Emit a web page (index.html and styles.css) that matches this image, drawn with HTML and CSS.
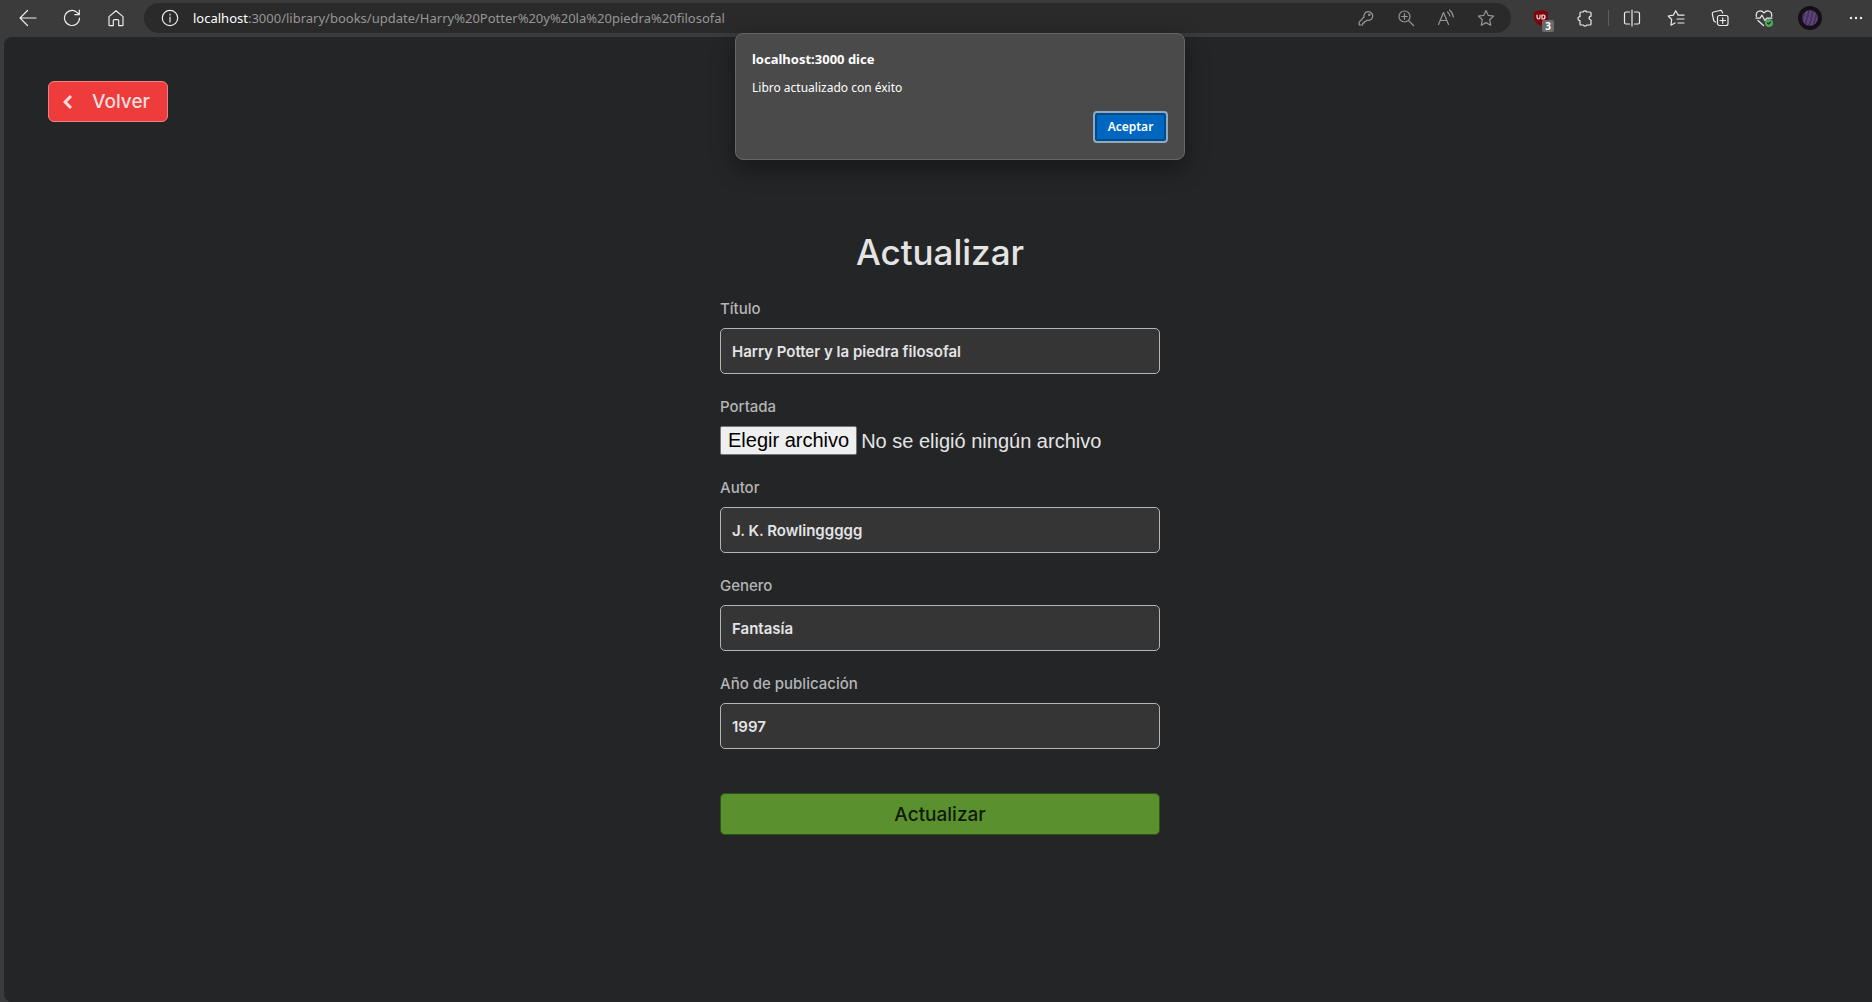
FILE: index.html
```html
<!DOCTYPE html>
<html lang="es">
<head>
  <meta charset="utf-8">
  <meta name="viewport" content="width=device-width, initial-scale=1">
  <title>Actualizar libro</title>
  <link rel="stylesheet" href="styles.css">
</head>
<body>
  <header class="toolbar">
    <nav class="toolbar-nav" aria-label="Navegación">
      <button class="tool" type="button" aria-label="Atrás"><svg class="icon" viewBox="0 0 18 18"><path d="M17 9H1.500M8.500 1.500L1 9l7.500 7.500"/></svg></button>
      <button class="tool" type="button" aria-label="Recargar"><svg class="icon" viewBox="0 0 18 18"><path d="M16.500 9A7.500 7.500 0 1 1 14 3.400L16 5.500M16.300 1v4.700h-4.500"/></svg></button>
      <button class="tool" type="button" aria-label="Inicio"><svg class="icon" viewBox="0 0 18 18"><path d="M2 7.600L9 1.700l7 5.900v8.300q0 .7-.7.700h-3.600v-5q0-1-1-1H7.300q-1 0-1 1v5H2.700q-.7 0-.7-.7z"/></svg></button>
    </nav>

    <div class="address">
      <button class="tool" type="button" aria-label="Información del sitio"><svg class="icon" viewBox="0 0 18 18"><circle cx="9" cy="9" r="7.700"/><path d="M9 8v5M9 5v1"/></svg></button>
      <p class="url"><span class="url-host">localhost</span>:3000/library/books/update/Harry%20Potter%20y%20la%20piedra%20filosofal</p>
      <div class="address-tools">
        <button class="tool tool-dim" type="button" aria-label="Contraseñas"><svg class="icon" viewBox="0 0 18 18"><path d="M7 8A4.400 4.400 0 1 1 10 11.200L8.700 12.500H7.300V14H5.600v2H2.200v-2.800z"/><circle cx="12.300" cy="5.800" r=".7"/></svg></button>
        <button class="tool tool-dim" type="button" aria-label="Zoom"><svg class="icon" viewBox="0 0 18 18"><circle cx="7.500" cy="7.500" r="5.500"/><path d="M11.600 11.600L16.500 16.500M7.500 4.700v5.600M4.700 7.500h5.600"/></svg></button>
        <button class="tool tool-dim" type="button" aria-label="Leer en voz alta"><svg class="icon" viewBox="0 0 18 18"><path d="M1.500 15.500L6.500 3.500l5 12M3.200 11.500h6.600M10.500 3q2 1.500 2.300 4M12.500 1q3.300 2.500 3.800 7"/></svg></button>
        <button class="tool tool-dim" type="button" aria-label="Favorito"><svg class="icon" viewBox="0 0 18 18"><path d="M9 1.500l2.300 4.900 5.300.7-3.900 3.700 1 5.400L9 13.600l-4.700 2.600 1-5.400L1.400 7.100l5.300-.7z"/></svg></button>
      </div>
    </div>

    <div class="toolbar-extras">
      <button class="tool" type="button" aria-label="Bloqueador, 3 elementos">
        <svg class="icon" viewBox="0 0 18 18"><path class="shield" d="M9 1l7 2v6q0 4.800-7 8-7-3.200-7-8V3z"/><path d="M5 6v2q0 2 1.500 2T8 8V6M10 6v4h1q2 0 2-2t-2-2z"/></svg>
        <span class="badge">3</span>
      </button>
      <button class="tool" type="button" aria-label="Extensiones"><svg class="icon" viewBox="0 0 18 18"><path d="M5 3h2.200a2 2 0 0 1 3.600 0H14q1 0 1 1v3.200a1.900 1.900 0 1 0 0 3.800V15q0 1-1 1h-3.200a2 2 0 0 1-3.600 0H5q-1 0-1-1v-3.300a2 2 0 0 1 0-4V4q0-1 1-1z"/></svg></button>
      <span class="divider"></span>
      <button class="tool" type="button" aria-label="Pantalla dividida"><svg class="icon" viewBox="0 0 18 18"><path d="M6.500 3H3Q1.500 3 1.500 4.500v9Q1.500 15 3 15h3.500M11.500 3H15q1.500 0 1.500 1.500v9q0 1.500-1.500 1.500h-3.500M9 1v16"/></svg></button>
      <button class="tool" type="button" aria-label="Favoritos"><svg class="icon" viewBox="0 0 18 18"><path d="M11 5.700L8.700 1.700 6.300 6.200 1.200 7l3.500 3.500-.8 5.700L8 13.900M11 6.200h6M10 10H17M11 14H17"/></svg></button>
      <button class="tool" type="button" aria-label="Colecciones"><svg class="icon" viewBox="0 0 18 18"><rect x="6.500" y="6.500" width="10.500" height="10" rx="2"/><path d="M11.700 8.800v5.500M9 11.500h5.500M4.500 13L2.800 11.800 1.300 5Q1 3.500 2.500 3L9 1.500q1.500-.2 2 1l.7 1.500"/></svg></button>
      <button class="tool" type="button" aria-label="Rendimiento"><svg class="icon" viewBox="0 0 18 18"><path d="M1.500 7.500Q.5 3.500 3.500 2.200 6.700 1 9 4q2.300-3 5.500-1.800 3 1.300 2 5.300M1 9.200h4L7 6.200l3 5.500 1.700-2.500H17M3 11.500l5.500 5"/><circle class="status" cx="14" cy="14" r="4"/><path class="status-tick" d="M12.500 14l1 1 2-2"/></svg></button>
      <button class="avatar" type="button" aria-label="Perfil"></button>
      <button class="tool" type="button" aria-label="Más opciones"><svg class="icon" viewBox="0 0 18 18"><g class="dots"><circle cx="4" cy="9" r="1.200"/><circle cx="9" cy="9" r="1.200"/><circle cx="14" cy="9" r="1.200"/></g></svg></button>
    </div>
  </header>

  <main class="page">
    <button class="back" type="button"><svg class="back-icon" viewBox="0 0 10 16"><path d="M8 2L2 8l6 6"/></svg>Volver</button>

    <form class="form">
      <h1 class="title">Actualizar</h1>
      <div class="field">
        <label class="label" for="titulo">Título</label>
        <input class="input" id="titulo" type="text" value="Harry Potter y la piedra filosofal">
      </div>
      <div class="field">
        <label class="label" for="portada">Portada</label>
        <div class="file">
          <span class="file-button">Elegir archivo</span>
          <span>No se eligió ningún archivo</span>
          <input class="file-input" id="portada" type="file">
        </div>
      </div>
      <div class="field">
        <label class="label" for="autor">Autor</label>
        <input class="input" id="autor" type="text" value="J. K. Rowlinggggg">
      </div>
      <div class="field">
        <label class="label" for="genero">Genero</label>
        <input class="input" id="genero" type="text" value="Fantasía">
      </div>
      <div class="field">
        <label class="label" for="anio">Año de publicación</label>
        <input class="input" id="anio" type="text" value="1997">
      </div>
      <button class="submit" type="submit">Actualizar</button>
    </form>
  </main>

  <dialog class="alert" open aria-labelledby="alert-title">
    <h2 class="alert-title" id="alert-title">localhost:3000 dice</h2>
    <p class="alert-text">Libro actualizado con éxito</p>
    <button class="alert-accept" type="button">Aceptar</button>
  </dialog>
</body>
</html>
```

FILE: styles.css
```css
* {
  box-sizing: border-box;
}

body {
  margin: 0;
  min-height: 100vh;
  display: flex;
  flex-direction: column;
  position: relative;
  background: #3b3b3b;
  color: #e4e4e5;
  font-family: "Inter", sans-serif;
}

button,
input {
  font: inherit;
}

button {
  padding: 0;
  border: 0;
  background: none;
  color: inherit;
}

h1,
h2,
p {
  margin: 0;
}

/* Browser toolbar */
.toolbar {
  height: 37px;
  padding: 3px 4px 4px 16px;
  display: flex;
  align-items: center;
  gap: 16px;
}

.toolbar-nav {
  display: flex;
  gap: 20px;
}

.tool {
  position: relative;
  width: 24px;
  height: 24px;
  display: flex;
  flex: none;
  align-items: center;
  justify-content: center;
  color: #ececec;
}

.tool-dim {
  color: #969696;
}

.icon {
  width: 18px;
  height: 18px;
  fill: none;
  stroke: currentColor;
  stroke-width: 1.2;
  stroke-linecap: round;
  stroke-linejoin: round;
}

.address {
  flex: 1;
  height: 30px;
  padding: 0 13px 0 14px;
  display: flex;
  align-items: center;
  gap: 11px;
  border-radius: 15px;
  background: #2a2a2a;
}

.url {
  flex: 1;
  min-width: 0;
  overflow: hidden;
  white-space: nowrap;
  color: #969696;
  font: 13px/20px "Noto Sans", sans-serif;
}

.url-host {
  color: #ffffff;
}

.address-tools {
  display: flex;
  gap: 16px;
}

.toolbar-extras {
  padding-left: 2px;
  display: flex;
  align-items: center;
  gap: 20px;
}

.shield {
  fill: #800009;
  stroke: none;
}

.badge {
  position: absolute;
  right: -1px;
  bottom: -2px;
  width: 12px;
  height: 12px;
  border-radius: 2px;
  background: #6a6a6a;
  color: #ffffff;
  font: bold 10px/12px "Noto Sans", sans-serif;
}

.divider {
  width: 1px;
  height: 16px;
  margin: 0 -9px;
  background: #5f5f5f;
}

.status {
  fill: #4fa660;
  stroke: none;
}

.status-tick {
  stroke: #173f20;
}

.avatar {
  width: 24px;
  height: 24px;
  margin: 0 2px;
  border: 4px solid #160f19;
  border-radius: 50%;
  background: repeating-linear-gradient(105deg, #5d4378 0 2px, #49335f 2px 4px) #160f19;
  background-clip: padding-box;
}

.dots {
  fill: currentColor;
  stroke: none;
}

/* Page */
.page {
  flex: 1;
  margin-left: 4px;
  padding: 44px 40px 40px 44px;
  border-radius: 8px 0 0 8px;
  background: #242526;
}

.back {
  width: 120px;
  height: 41px;
  padding: 0 14px;
  display: flex;
  align-items: center;
  gap: 19px;
  border: 1px solid #f38080;
  border-radius: 6px;
  background: #ee3b3b;
  color: #f8dede;
  font-size: 19px;
  font-weight: 500;
}

.back-icon {
  width: 10px;
  height: 16px;
  fill: none;
  stroke: currentColor;
  stroke-width: 3;
}

.form {
  width: 440px;
  max-width: 100%;
  margin: 106px auto 0;
  display: flex;
  flex-direction: column;
  gap: 21px;
}

.title {
  font-size: 35px;
  font-weight: 500;
  line-height: 48px;
  text-align: center;
}

.field {
  display: flex;
  flex-direction: column;
  gap: 7px;
}

.label {
  color: #b4b4b5;
  font-size: 15px;
  font-weight: 500;
  line-height: 24px;
}

.input {
  width: 100%;
  height: 46px;
  padding: 0 11px;
  border: 1px solid #b4b4b5;
  border-radius: 5px;
  background: #353536;
  color: #e4e4e5;
  font-size: 15px;
  font-weight: 600;
}

.file {
  position: relative;
  height: 29px;
  display: flex;
  align-items: center;
  gap: 4px;
  font: 20px/24px "Liberation Sans", Arial, sans-serif;
}

.file-button {
  height: 29px;
  padding: 1px 7px;
  border: 1px solid #767676;
  border-radius: 2px;
  background: #efefef;
  color: #000000;
}

.file-input {
  position: absolute;
  inset: 0;
  width: 100%;
  opacity: 0;
}

.submit {
  height: 42px;
  margin-top: 23px;
  border: 1px solid #2f5610;
  border-radius: 5px;
  background: #5a912e;
  color: #101a08;
  font-size: 19px;
  font-weight: 500;
}

/* Alert over the page */
.alert {
  position: absolute;
  top: 33px;
  left: calc(50% - 201px);
  width: 450px;
  margin: 0;
  padding: 15px 16px 16px;
  display: flex;
  flex-direction: column;
  gap: 9px;
  border: 1px solid #666666;
  border-radius: 8px;
  background: #4a4a4a;
  color: #ffffff;
  font: 12px/20px "Noto Sans", sans-serif;
  box-shadow: 0 8px 24px rgba(0, 0, 0, 0.4);
}

.alert-title {
  font-size: 13px;
  font-weight: 700;
  line-height: 20px;
}

.alert-accept {
  width: 75px;
  height: 32px;
  margin-top: 4px;
  align-self: flex-end;
  border: 2px solid #8fa9bf;
  border-radius: 4px;
  background: #0067c0;
  box-shadow: inset 0 0 0 2px #004b8b;
  font-size: 12px;
  font-weight: 600;
}
```
